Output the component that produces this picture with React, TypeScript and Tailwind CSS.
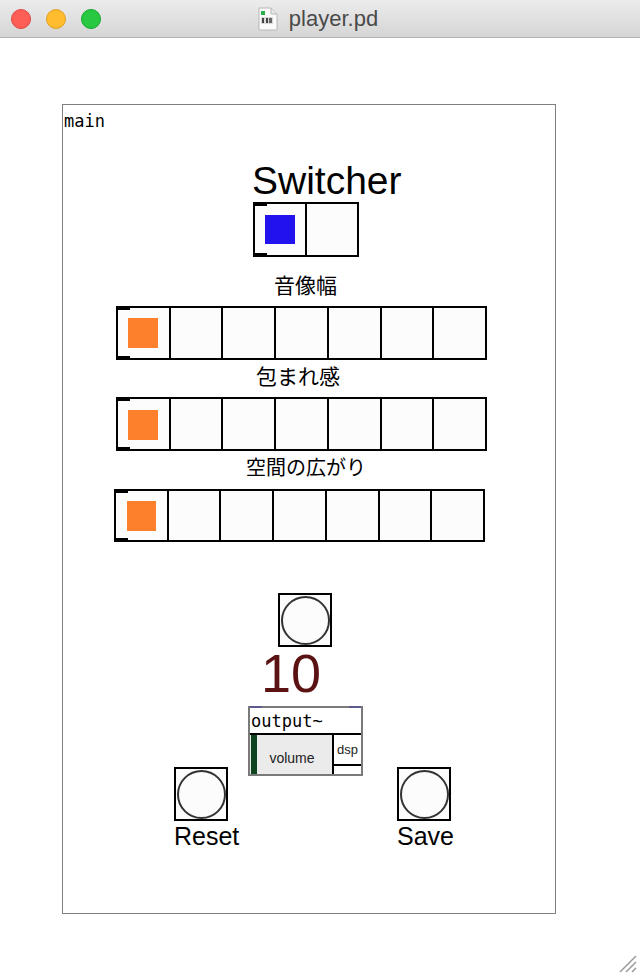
import React from "react";

const SANS = "font-['Liberation_Sans','Arimo',Arial,sans-serif]";
const MONO = "font-['DejaVu_Sans_Mono','Liberation_Mono',monospace]";
const CJK = "font-['Noto_Sans_CJK_JP','Noto_Sans',sans-serif]";

interface RadioProps {
  pos: string;
  size: string;
  n: number;
  color: string;
  dot: string;
}

function Radio({ pos, size, n, color, dot }: RadioProps) {
  return (
    <div className={`absolute flex border-2 border-black bg-[#fcfcfc] ${pos} ${size}`}>
      {Array.from({ length: n }).map((_, i) => (
        <div
          key={i}
          className={`relative flex-1 ${i > 0 ? "border-l-2 border-black" : ""}`}
        >
          {i === 0 && (
            <>
              <div className="absolute left-0 top-0 h-[2px] w-[12px] bg-black" />
              <div className="absolute left-0 bottom-0 h-[2px] w-[12px] bg-black" />
              <div className={`absolute ${dot} ${color}`} />
            </>
          )}
        </div>
      ))}
    </div>
  );
}

function Bang({ pos }: { pos: string }) {
  return (
    <div
      className={`absolute flex h-[54px] w-[54px] items-center justify-center border-2 border-black bg-[#fcfcfc] ${pos}`}
    >
      <div className="h-[49px] w-[49px] rounded-full border-2 border-[#333]" />
    </div>
  );
}

function TitleBar() {
  return (
    <div className="relative flex h-[38px] shrink-0 items-center justify-center border-b border-[#b3b3b3] bg-gradient-to-b from-[#ececec] to-[#d5d5d5]">
      <div className="absolute left-[11px] top-[9px] flex gap-[15px]">
        <span className="h-[20px] w-[20px] rounded-full border border-[#e0443e] bg-[#fd5f57]" />
        <span className="h-[20px] w-[20px] rounded-full border border-[#dea123] bg-[#febc2e]" />
        <span className="h-[20px] w-[20px] rounded-full border border-[#13a72c] bg-[#28c840]" />
      </div>
      <div className="flex items-center gap-[11px] pr-[4px]">
        <svg width="20" height="24" viewBox="0 0 20 24">
          <path d="M1 1h12l6 6v16H1z" fill="#fafafa" stroke="#b8b8b8" />
          <path d="M13 1v6h6" fill="#e6e6e6" stroke="#b8b8b8" />
          <rect x="3" y="4" width="4" height="4" fill="#2bb04a" />
          <rect x="3" y="10" width="12" height="7" fill="#d9d9d9" />
          <rect x="4" y="11" width="2" height="5" fill="#444" />
          <rect x="8" y="11" width="2" height="5" fill="#444" />
          <rect x="11" y="11" width="3" height="5" fill="#666" />
        </svg>
        <span className={`${SANS} text-[22px] leading-none text-[#4a4a4a]`}>player.pd</span>
      </div>
    </div>
  );
}

function OutputBox() {
  return (
    <div className="absolute left-[185px] top-[601px] h-[70px] w-[115px] border-2 border-[#7a7a7a] bg-white">
      <div className="absolute left-0 top-[-2px] h-[2px] w-[12px] bg-[#5b5b8c]" />
      <div className="absolute right-0 top-[-2px] h-[2px] w-[12px] bg-[#5b5b8c]" />
      <div className="flex h-[25px] items-center pl-[1px] pt-[1px]">
        <span className={`${MONO} text-[17px] leading-none text-black`}>output~</span>
      </div>
      <div className="flex h-[41px] border-t-2 border-black">
        <div className="relative flex w-[84px] items-center justify-center border-r-2 border-black bg-[#ebebeb]">
          <div className="absolute left-[1px] top-0 bottom-0 w-[6px] bg-[#0f4420]" />
          <span className={`${SANS} pl-[2px] pt-[6px] text-[14px] leading-none text-[#222]`}>volume</span>
        </div>
        <div className="flex flex-1 flex-col">
          <div className="flex h-[31px] items-center justify-center border-b-2 border-black">
            <span className={`${SANS} text-[13px] leading-none text-[#222]`}>dsp</span>
          </div>
        </div>
      </div>
    </div>
  );
}

export default function App() {
  return (
    <div className="relative flex h-[976px] w-[640px] flex-col overflow-hidden bg-white">
      <TitleBar />
      <div className="flex-1 pl-[62px] pt-[66px]">
        <div className="relative h-[810px] w-[494px] border border-[#7f7f7f]">
          <span className={`absolute left-[1px] top-[8px] ${MONO} text-[17px] leading-none text-black`}>
            main
          </span>

          <span className={`absolute left-[189px] top-[56px] ${SANS} text-[39px] leading-none text-black`}>
            Switcher
          </span>
          <Radio
            pos="left-[190px] top-[97px]"
            size="w-[106px] h-[55px]"
            n={2}
            color="bg-[#2212ee]"
            dot="left-[10px] top-[11px] w-[30px] h-[29px]"
          />

          <span className={`absolute left-[211px] top-[169px] ${CJK} text-[21px] leading-none text-black`}>
            音像幅
          </span>
          <Radio
            pos="left-[53px] top-[201px]"
            size="w-[371px] h-[54px]"
            n={7}
            color="bg-[#fd802c]"
            dot="left-[10px] top-[10px] w-[30px] h-[30px]"
          />

          <span className={`absolute left-[193px] top-[260px] ${CJK} text-[21px] leading-none text-black`}>
            包まれ感
          </span>
          <Radio
            pos="left-[53px] top-[292px]"
            size="w-[371px] h-[54px]"
            n={7}
            color="bg-[#fd802c]"
            dot="left-[10px] top-[11px] w-[30px] h-[30px]"
          />

          <span className={`absolute left-[183px] top-[352px] ${CJK} text-[20px] leading-none text-black`}>
            空間の広がり
          </span>
          <Radio
            pos="left-[51px] top-[384px]"
            size="w-[371px] h-[53px]"
            n={7}
            color="bg-[#fd802c]"
            dot="left-[11px] top-[10px] w-[29px] h-[30px]"
          />

          <Bang pos="left-[215px] top-[488px]" />
          <span className={`absolute left-[198px] top-[541px] ${SANS} text-[54px] leading-none text-[#5a1212]`}>
            10
          </span>

          <OutputBox />

          <Bang pos="left-[111px] top-[662px]" />
          <span className={`absolute left-[111px] top-[719px] ${SANS} text-[25px] leading-none text-black`}>
            Reset
          </span>

          <Bang pos="left-[334px] top-[662px]" />
          <span className={`absolute left-[334px] top-[719px] ${SANS} text-[25px] leading-none text-black`}>
            Save
          </span>
        </div>
      </div>
      <svg className="absolute bottom-[3px] right-[3px]" width="22" height="22" viewBox="0 0 22 22">
        <path d="M21 5L5 21M21 11L11 21M21 17L17 21" stroke="#9a9a9a" strokeWidth="1.5" />
      </svg>
    </div>
  );
}
